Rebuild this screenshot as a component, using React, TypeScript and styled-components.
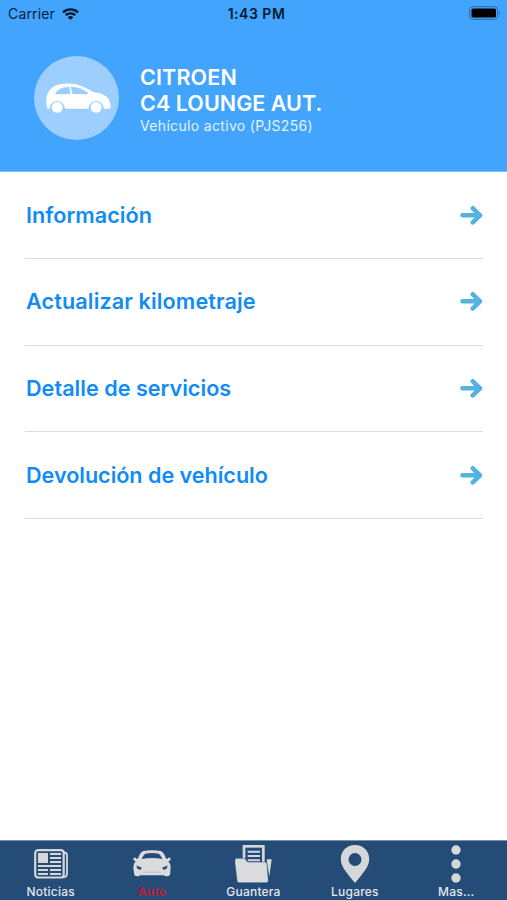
import React from "react";
import styled, { createGlobalStyle } from "styled-components";

const GlobalStyle = createGlobalStyle`
  *, *::before, *::after { box-sizing: border-box; }
  html, body, #root { margin: 0; height: 100%; }
  body { font-family: Inter, "Liberation Sans", sans-serif; background: #fff; overflow: hidden; }
  svg { display: block; flex: none; }
`;

const Screen = styled.div`
  display: flex;
  flex-direction: column;
  width: 507px;
  height: 900px;
  background: #fff;
`;

const Header = styled.header`
  height: 172px;
  flex: none;
  background: #42a4fd;
  border-bottom: 1px solid #7dc0fb;
`;

const StatusBar = styled.div`
  display: grid;
  grid-template-columns: 1fr auto 1fr;
  align-items: center;
  height: 28px;
  padding: 0 6px 1px 8px;
  color: #05213a;
  font-size: 14px;
`;

const Carrier = styled.div`
  display: flex;
  align-items: center;
  gap: 7px;
  letter-spacing: 0.15px;
`;

const Clock = styled.div`
  color: #041a2e;
  font-weight: 600;
  padding-left: 4px;
  letter-spacing: 0.5px;
`;

const Battery = styled.div`
  justify-self: end;
  padding-bottom: 1px;
`;

const Vehicle = styled.div`
  display: flex;
  align-items: center;
  height: 140px;
  padding-left: 34px;
  gap: 21px;
`;

const Avatar = styled.div`
  display: grid;
  place-items: center;
  width: 85px;
  height: 84px;
  border-radius: 50%;
  background: #9ccffe;
  padding: 0 0 1px 4px;
`;

const VehicleText = styled.div`
  color: #fff;
  padding-top: 2px;
`;

const VehicleName = styled.h1<{ $tracking: number }>`
  margin: 0;
  font-size: 21.5px;
  line-height: 26.5px;
  font-weight: 600;
  white-space: nowrap;
  letter-spacing: ${(p) => p.$tracking}px;
`;

const VehicleStatus = styled.p`
  margin: 0;
  color: #e4f2ff;
  font-size: 14px;
  line-height: 18px;
  letter-spacing: 0.33px;
`;

const Menu = styled.nav`
  flex: 1;
  padding: 0 24px 0 25px;
`;

const MenuRow = styled.a<{ $tracking: number }>`
  display: flex;
  align-items: center;
  justify-content: space-between;
  height: 86.8px;
  padding: 0 0 0.5px 1px;
  border-bottom: 1px solid #dedede;
  color: #118bf5;
  font-size: 21.6px;
  font-weight: 600;
  white-space: nowrap;
  letter-spacing: ${(p) => p.$tracking}px;
`;

const TabBar = styled.footer`
  display: grid;
  grid-template-columns: repeat(5, 1fr);
  height: 60px;
  flex: none;
  background: #244c77;
  border-top: 1px solid #7893ad;
`;

const Tab = styled.div<{ $active?: boolean }>`
  display: flex;
  flex-direction: column;
  align-items: center;
  color: ${(p) => (p.$active ? "#c01c35" : "#e3e8ee")};
  font-size: 12px;
  font-weight: ${(p) => (p.$active ? 600 : 500)};
  line-height: 14px;
  letter-spacing: 0.2px;
`;

const TabIcon = styled.div`
  display: grid;
  place-items: center;
  height: 44px;
  padding-top: 1px;
`;

const WifiIcon = () => (
  <svg width="17" height="12" viewBox="0 0 17 12" fill="none" stroke="#04192d" strokeWidth="2.3">
    <path d="M1 4.3a11 11 0 0 1 15 0M3.7 7.2a7 7 0 0 1 9.6 0" />
    <path d="M5.7 9.2a4.2 4.2 0 0 1 5.6 0L8.5 12z" fill="#04192d" stroke="none" />
  </svg>
);

const BatteryIcon = () => (
  <svg width="32" height="14" viewBox="0 0 32 14">
    <rect x=".7" y=".7" width="28" height="12.6" rx="3" fill="none" stroke="#246aa8" />
    <rect x="2.5" y="2.5" width="24.5" height="9" rx="1.5" fill="#000" />
    <path d="M30 5v4q2-2 0-4" fill="#246aa8" />
  </svg>
);

const CompactCarIcon = () => (
  <svg width="65" height="30" viewBox="79 111 194 90">
    <path
      fill="#fff"
      d="M83 188q-7-20-1-42q10-28 41-32q35-4 62 6q17 7 35 18q28 3 41 15q10 9 12 30q-1 5-5 5h-16a23 23 0 0 0-46 0h-71a23 23 0 0 0-46 0z"
    />
    <g fill="#9ccffe">
      <path d="M106 144q6-19 42-22l4 22-37 1q-6 0-9-1M153 122q29 0 52 18 0 5-7 5l-40-1z" />
    </g>
    <g fill="#fff">
      <circle cx="112" cy="184" r="16.5" />
      <circle cx="229" cy="184" r="16.5" />
    </g>
  </svg>
);

const ArrowIcon = () => (
  <svg width="23" height="20" viewBox="0 0 23 20" fill="none" stroke="#53b4df" strokeWidth="4.6" strokeLinecap="round" strokeLinejoin="round">
    <path d="M2.5 10.3h17.5M12.8 3.3l7.2 7-7.2 7" />
  </svg>
);

const NewsIcon = () => (
  <svg width="34" height="30" viewBox="0 0 34 30" fill="none" stroke="#d5d7d9">
    <rect x="1.2" y="1.2" width="28.5" height="27.3" rx="3" strokeWidth="2.2" />
    <path d="M30 3.5q3 0 3 3v18q0 4-5 4" strokeWidth="1.8" />
    <path fill="#d5d7d9" stroke="none" d="M4 4h10v10H4z" />
    <path strokeWidth="2.2" d="M16 5h11M16 9h11M16 13h11M4 17h23M4 21h10M16 21h11M4 25h10M16 25h11" />
  </svg>
);

const FrontCarIcon = () => (
  <svg width="38" height="27" viewBox="71 59 116 82">
    <path
      fill="#d9dbdd"
      d="M87 83Q93 66 102 62Q129 57 156 62Q165 66 171 83L175 87Q178 81 183 82Q188 85 185 90L179 93Q186 100 186 112L184 134Q180 139 174 139Q167 139 166 136H93Q91 139 84 139Q77 139 75 134L72 112Q72 100 79 93L73 90Q70 85 75 82Q80 81 83 87Z"
    />
    <path fill="#244c77" d="M97 86Q103 74 108 70Q129 66 150 70Q155 74 161 86Q129 81 97 86M81 106L97 112L96 119L85 117ZM177 106L161 112L162 119L173 117Z" />
    <path stroke="#b4bcc5" strokeWidth="2" fill="none" d="M100 127H158" />
  </svg>
);

const FolderIcon = () => (
  <svg width="37" height="38" viewBox="77 44 111 114">
    <path fill="#d5d7d9" d="M100 44h66v54h-66z" />
    <path fill="#244c77" d="M108 52h50v45h-50z" />
    <path stroke="#d5d7d9" strokeWidth="6" d="M115 64h37M115 77h37M115 90h37" />
    <path fill="#d9dbdd" stroke="#244c77" strokeWidth="1.5" d="M81 84h24l10 11h52q6 0 6 6l4 50q0 6-6 6H89q-6 0-6-6l-7-59q0-6 5-8" />
    <path fill="#d9dbdd" d="M172 87h15l-7 52z" />
  </svg>
);

const PinIcon = () => (
  <svg width="30" height="38" viewBox="0 0 30 38">
    <path fill="#d5d7d9" fillRule="evenodd" d="M15 0C6.5 0 .8 6.3.8 14 .8 22 7 28 15 38 23 28 29.2 22 29.2 14 29.2 6.3 23.5 0 15 0M15 8a6.5 6.5 0 1 1 0 13 6.5 6.5 0 0 1 0-13" />
  </svg>
);

const MoreIcon = () => (
  <svg width="10" height="38" viewBox="0 0 10 38" fill="#d5d7d9">
    <circle cx="5" cy="5" r="4.7" />
    <circle cx="5" cy="19" r="4.7" />
    <circle cx="5" cy="33" r="4.7" />
  </svg>
);

const menuItems = [
  { label: "Información", tracking: 0.05 },
  { label: "Actualizar kilometraje", tracking: 0.13 },
  { label: "Detalle de servicios", tracking: 0.02 },
  { label: "Devolución de vehículo", tracking: -0.03 },
];

const tabs = [
  { label: "Noticias", icon: <NewsIcon /> },
  { label: "Auto", icon: <FrontCarIcon />, active: true },
  { label: "Guantera", icon: <FolderIcon /> },
  { label: "Lugares", icon: <PinIcon /> },
  { label: "Mas...", icon: <MoreIcon /> },
];

export default function App() {
  return (
    <>
      <GlobalStyle />
      <Screen>
        <Header>
          <StatusBar>
            <Carrier>
              Carrier
              <WifiIcon />
            </Carrier>
            <Clock>1:43 PM</Clock>
            <Battery>
              <BatteryIcon />
            </Battery>
          </StatusBar>
          <Vehicle>
            <Avatar>
              <CompactCarIcon />
            </Avatar>
            <VehicleText>
              <VehicleName $tracking={0.15}>CITROEN</VehicleName>
              <VehicleName $tracking={0.05}>C4 LOUNGE AUT.</VehicleName>
              <VehicleStatus>Vehículo activo (PJS256)</VehicleStatus>
            </VehicleText>
          </Vehicle>
        </Header>
        <Menu>
          {menuItems.map((item) => (
            <MenuRow key={item.label} $tracking={item.tracking}>
              {item.label}
              <ArrowIcon />
            </MenuRow>
          ))}
        </Menu>
        <TabBar>
          {tabs.map((tab) => (
            <Tab key={tab.label} $active={tab.active}>
              <TabIcon>{tab.icon}</TabIcon>
              {tab.label}
            </Tab>
          ))}
        </TabBar>
      </Screen>
    </>
  );
}
